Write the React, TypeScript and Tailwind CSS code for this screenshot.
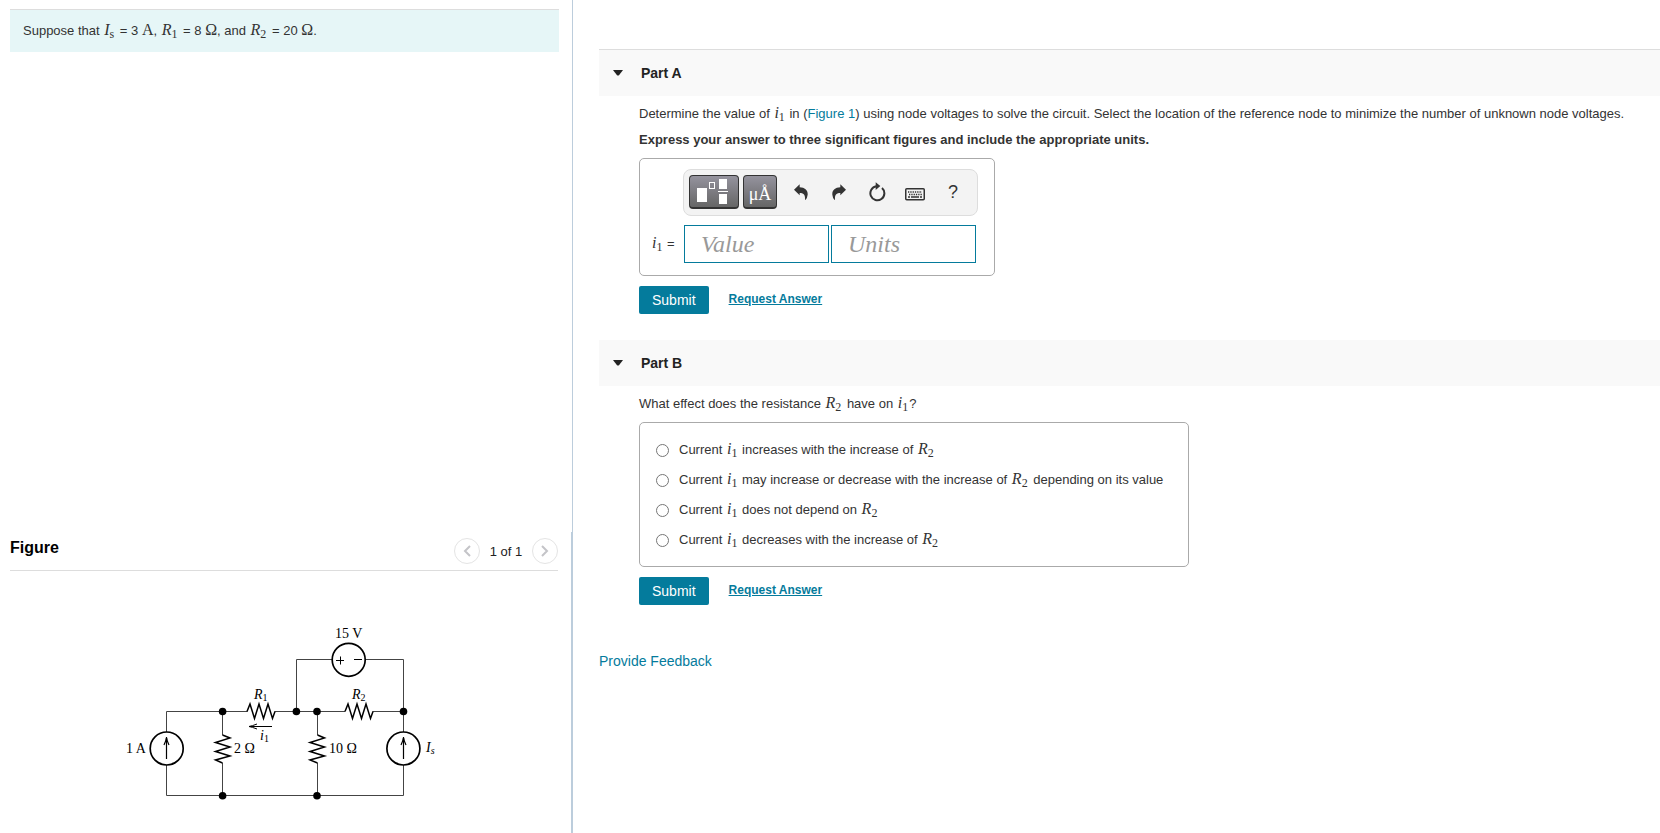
import { useState } from "react";
import type { ReactNode } from "react";

// Math symbol set in serif italics with an optional upright subscript
function Sym({ name, sub }: { name: string; sub?: string }) {
  return (
    <span
      className={`font-['Liberation_Serif',serif] text-base leading-none ${
        name === "i" ? "px-px" : "pr-[2px] pl-px"
      }`}
    >
      <i>{name}</i>
      {sub && <span className="relative top-[3px] text-xs leading-none">{sub}</span>}
    </span>
  );
}

function Unit({ children }: { children: ReactNode }) {
  return <span className="font-['Liberation_Serif',serif] text-base leading-none">{children}</span>;
}

function PartHeader({ title, first }: { title: string; first?: boolean }) {
  return (
    <h2
      className={`flex items-center bg-[#f9f9f9] pl-[14px] text-sm font-bold text-[#222] ${
        first ? "h-[47px] border-t border-[#ddd]" : "h-[46px]"
      }`}
    >
      <button type="button" aria-label={`Toggle ${title}`} className="mr-[18px]">
        <svg width="10" height="6" viewBox="0 0 10 6" fill="#222">
          <path d="M0 0h10L6 5.2Q5 6 4 5.2Z" />
        </svg>
      </button>
      {title}
    </h2>
  );
}

function Actions() {
  return (
    <div className="mt-[10px] flex items-center gap-5">
      <button type="button" className="h-7 rounded-[2px] bg-[#047b9c] px-[13px] text-sm text-white">
        Submit
      </button>
      <a href="#request" className="pb-[2px] text-xs font-bold text-[#047b9c] underline">
        Request Answer
      </a>
    </div>
  );
}

const darkButton =
  "flex h-[34px] items-center justify-center rounded-[4px] border border-b-2 border-[#333] bg-linear-to-b from-[#95939e] to-[#666]";

const iconButton = "flex h-8 w-[38px] items-center justify-center";

function Toolbar() {
  return (
    <div className="flex h-[47px] items-center rounded-lg border border-[#ddd] bg-[#f3f3f3] px-[5px] pb-px text-[#333]">
      <button type="button" aria-label="Templates" className={`${darkButton} w-[50px]`}>
        <svg width="48" height="31" viewBox="0 0 48 31" fill="#fff">
          <rect x="7" y="12" width="10" height="14" />
          <rect x="19.5" y="6.500" width="5" height="6" fill="none" stroke="#fff" />
          <rect x="29" y="3" width="8" height="10" />
          <rect x="28" y="15" width="10" height="1" />
          <rect x="29" y="18" width="8" height="10" />
        </svg>
      </button>
      <button
        type="button"
        aria-label="Symbols"
        className={`${darkButton} mr-[5px] ml-1 w-[34px] pt-1 font-['Liberation_Serif',serif] text-lg leading-none text-white`}
      >
        μÅ
      </button>
      <button type="button" aria-label="Undo" className={iconButton}>
        <svg width="14" height="16" viewBox="0 0 42 48" fill="#333">
          <path d="M0 17 17 1v9c16 1 25 9 24 22q-1 9-6 15-1 2-2-1c1-13-4-19-16-19v7Z" />
        </svg>
      </button>
      <button type="button" aria-label="Redo" className={iconButton}>
        <svg width="14" height="16" viewBox="0 0 42 48" fill="#333">
          <path d="M42 17 25 1v9C9 11 0 19 1 32q1 9 6 15 1 2 2-1c-1-13 4-19 16-19v7Z" />
        </svg>
      </button>
      <button type="button" aria-label="Reset" className={iconButton}>
        <svg width="18" height="20" viewBox="0 0 54 60">
          <path d="M42 18A21 21 0 1 1 25 13" fill="none" stroke="#333" strokeWidth="6" />
          <path d="M23 1 37 12 23 24Z" fill="#333" />
        </svg>
      </button>
      <button type="button" aria-label="Keyboard shortcuts" className={`${iconButton} pt-1`}>
        <svg width="20" height="13" viewBox="0 0 20 13" fill="none" stroke="#333">
          <rect x=".75" y=".75" width="18.5" height="11" rx="1" strokeWidth="1.5" />
          <path d="M3 4h14M4 6.500h13" strokeWidth="1.300" strokeDasharray="1.300 1" />
          <path d="M3 9h2m1 0h8m1 0h2" strokeWidth="1.300" />
        </svg>
      </button>
      <button type="button" aria-label="Help" className={`${iconButton} text-lg leading-none`}>
        ?
      </button>
    </div>
  );
}

const inputClass =
  "h-[38px] w-[145px] border border-[#047b9c] px-4 font-['Liberation_Serif',serif] text-2xl italic text-[#333] outline-none placeholder:text-[#999]";

function Circuit() {
  return (
    <svg
      width="350"
      height="200"
      viewBox="0 0 350 200"
      fill="none"
      stroke="#000"
      className="font-['Liberation_Serif',serif] text-sm"
    >
      {/* wires */}
      <g stroke="#444">
        <path d="M55.5 122V101.5H136.5M163.5 101.5H234M261.5 101.5H292.5" />
        <path d="M55.5 155V185.5H292.5V155M292.5 122V49.5H254.5M221 49.5H185.5V101.5" />
        <path d="M111.5 101.5V125M111.5 153V185.5M206.5 101.5V125M206.5 153V185.5" />
      </g>
      {/* resistors */}
      <g strokeWidth="1.5" strokeLinejoin="miter">
        <path d="M136 101.5 139 94 143.5 108.5 148 94 152.5 108.5 157 94 161.5 108.5 164 101.5" />
        <path d="M234 101.5 237 94 241.5 108.5 246 94 250.5 108.5 255 94 259.5 108.5 262 101.5" />
        <path d="M111.5 125 119 128 104.5 132.5 119 137 104.5 141.5 119 146 104.5 150 111.5 153" />
        <path d="M206.5 125 213.5 128 199 132.5 213.5 137 199 141.5 213.5 146 199 150 206.5 153" />
      </g>
      {/* sources */}
      <g strokeWidth="1.7">
        <circle cx="55.7" cy="138.5" r="16.5" />
        <circle cx="292.4" cy="138.5" r="16.5" />
        <circle cx="237.7" cy="49.8" r="16.5" />
      </g>
      <path
        d="M55.5 149V127M53 135Q55 131 55.5 127 56 131 58 135M292.5 149V127M290 135Q292 131 292.5 127 293 131 295 135"
        strokeWidth="1.2"
      />
      <path d="M225 50.5H233M229.5 46.5V54.5M243 49.5H251" />
      <path d="M161 116.5H138M146 114Q141 116 138 116.5 141 117 146 119" />
      {/* nodes */}
      <g fill="#000" stroke="none">
        <circle cx="111.6" cy="101.5" r="3.8" />
        <circle cx="185.4" cy="101.5" r="3.8" />
        <circle cx="206" cy="101.5" r="3.8" />
        <circle cx="292.5" cy="101.5" r="3.8" />
        <circle cx="111.6" cy="185.7" r="3.8" />
        <circle cx="206" cy="185.7" r="3.8" />
      </g>
      <g fill="#000" stroke="none">
        <text x="15" y="143">1 A</text>
        <text x="123" y="143">2 Ω</text>
        <text x="218" y="143">10 Ω</text>
        <text x="224" y="28">15 V</text>
        <text x="143" y="89">
          <tspan fontStyle="italic">R</tspan>
          <tspan dy="2" fontSize="10">1</tspan>
        </text>
        <text x="241" y="89">
          <tspan fontStyle="italic">R</tspan>
          <tspan dy="2" fontSize="10">2</tspan>
        </text>
        <text x="149" y="130">
          <tspan fontStyle="italic">i</tspan>
          <tspan dy="2" fontSize="10">1</tspan>
        </text>
        <text x="315" y="142" fontStyle="italic">
          I
          <tspan dy="2" fontSize="10">s</tspan>
        </text>
      </g>
    </svg>
  );
}

const i1 = <Sym name="i" sub="1" />;
const r1 = <Sym name="R" sub="1" />;
const r2 = <Sym name="R" sub="2" />;

const options: ReactNode[] = [
  <>Current {i1} increases with the increase of {r2}</>,
  <>Current {i1} may increase or decrease with the increase of {r2} depending on its value</>,
  <>Current {i1} does not depend on {r2}</>,
  <>Current {i1} decreases with the increase of {r2}</>,
];

const pagerButton =
  "flex h-[26px] w-[26px] items-center justify-center rounded-full border border-[#e4e4e4]";

export default function App() {
  const [choice, setChoice] = useState<number | null>(null);

  return (
    <div className="grid min-h-screen grid-cols-[573fr_1087fr] bg-white font-['Liberation_Sans',Arial,sans-serif] text-[13px] text-[#333]">
      <div className="grid grid-rows-[532fr_301fr]">
        <section className="border-r border-[#bccddc] pt-[9px] pr-[13px] pl-[10px]">
          <p className="border-t border-[#ddd] bg-[#e6f6f7] px-[13px] py-[11px] leading-5">
            Suppose that <Sym name="I" sub="s" /> = 3 <Unit>A</Unit>, {r1} = 8 <Unit>Ω</Unit>, and {r2} = 20{" "}
            <Unit>Ω</Unit>.
          </p>
        </section>

        <section className="border-r-2 border-[#bccddc] pr-[13px] pl-[10px]">
          <div className="flex h-[39px] items-center justify-between border-b border-[#ddd]">
            <h2 className="pb-[7px] text-base font-bold text-black">Figure</h2>
            <div className="flex items-center text-[#222]">
              <button type="button" aria-label="Previous figure" className={pagerButton}>
                <svg width="8" height="12" viewBox="0 0 8 12" fill="none" stroke="#c4c4c8" strokeWidth="2">
                  <path d="M7 1 2 6l5 5" />
                </svg>
              </button>
              <span className="w-[52px] pt-[2px] text-center">1 of 1</span>
              <button type="button" aria-label="Next figure" className={pagerButton}>
                <svg width="8" height="12" viewBox="0 0 8 12" fill="none" stroke="#c4c4c8" strokeWidth="2">
                  <path d="m1 1 5 5-5 5" />
                </svg>
              </button>
            </div>
          </div>
          <div className="flex justify-center pt-[39px] pl-[3px]">
            <Circuit />
          </div>
        </section>
      </div>

      <main className="pt-[49px] pl-[26px]">
        <PartHeader title="Part A" first />
        <div className="pl-10">
          <p className="pt-2 leading-5">
            Determine the value of {i1} in (
            <a href="#figure" className="text-[#047b9c]">
              Figure 1
            </a>
            ) using node voltages to solve the circuit. Select the location of the reference node to minimize the
            number of unknown node voltages.
          </p>
          <p className="pt-[6px] leading-5 font-bold">
            Express your answer to three significant figures and include the appropriate units.
          </p>

          <div className="mt-2 w-fit rounded-[5px] border border-[#aaa] pt-[10px] pr-4 pb-3 pl-[11px]">
            <div className="w-fit pl-8">
              <Toolbar />
            </div>
            <div className="mt-[9px] flex items-center">
              <span className="w-[33px]">{i1} =</span>
              <input aria-label="Value" placeholder="Value" className={inputClass} />
              <input aria-label="Units" placeholder="Units" className={`${inputClass} ml-[2px]`} />
            </div>
          </div>
          <Actions />
        </div>

        <div className="mt-[26px]">
          <PartHeader title="Part B" />
        </div>
        <div className="pl-10">
          <p className="pt-2 leading-5">
            What effect does the resistance {r2} have on {i1}?
          </p>
          <fieldset className="mt-2 flex w-fit flex-col gap-[10px] rounded-[5px] border border-[#aaa] pt-[17px] pr-[25px] pb-4 pl-4">
            {options.map((option, i) => (
              <label key={i} className="flex items-center gap-[10px] leading-5">
                <input
                  type="radio"
                  name="effect"
                  checked={choice === i}
                  onChange={() => setChoice(i)}
                  className="h-[13px] w-[13px]"
                />
                <span>{option}</span>
              </label>
            ))}
          </fieldset>
          <Actions />
        </div>

        <a href="#feedback" className="mt-[46px] inline-block text-sm text-[#047b9c]">
          Provide Feedback
        </a>
      </main>
    </div>
  );
}
